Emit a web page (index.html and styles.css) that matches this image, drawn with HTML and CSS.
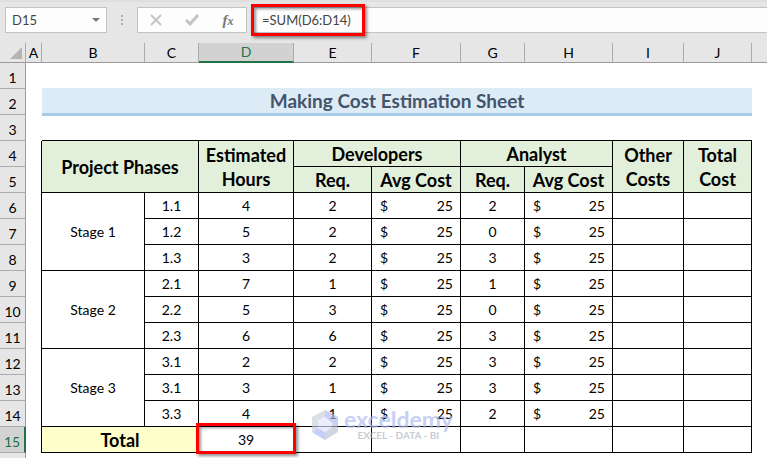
FILE: index.html
```
<!DOCTYPE html>
<html lang="en">
<head>
<meta charset="utf-8">
<title>Cost Estimation Sheet</title>
<link rel="stylesheet" href="styles.css">
</head>
<body>
<header class="formula-bar">
  <div class="name-box">
    <input class="name-input" type="text" aria-label="Name box" value="D15">
    <button class="tool drop" type="button" aria-label="Open name list"><svg width="8" height="4" viewBox="0 0 8 4"><path d="M0 0h8L4 4z" fill="#777"/></svg></button>
  </div>
  <div class="grip"><i></i><i></i><i></i></div>
  <div class="tools">
    <button class="tool" type="button" aria-label="Cancel"><svg width="12" height="12" viewBox="0 0 12 12"><path d="M1 1l10 10M11 1L1 11" stroke="#c4c4c4" stroke-width="2" fill="none"/></svg></button>
    <button class="tool" type="button" aria-label="Enter"><svg width="14" height="12" viewBox="0 0 14 12"><path d="M1 6l4 4L13 1" stroke="#c4c4c4" stroke-width="3" fill="none"/></svg></button>
    <button class="tool fx" type="button" aria-label="Insert function">f<span>x</span></button>
  </div>
  <div class="formula">
    <input class="formula-input" type="text" aria-label="Formula" value="=SUM(D6:D14)">
    <div class="mark mark-formula"></div>
  </div>
</header>
<main class="sheet">
<table class="grid">
  <colgroup><col class="w-n"><col class="w-a"><col class="w-b"><col class="w-c"><col class="w-d"><col class="w-e"><col class="w-f"><col class="w-g"><col class="w-h"><col class="w-i"><col class="w-j"><col></colgroup>
  <thead>
    <tr><th class="corner"><svg width="12" height="12" viewBox="0 0 12 12"><path d="M12 0v12H0z" fill="#b4b4b4"/></svg></th><th>A</th><th>B</th><th>C</th><th class="on">D</th><th>E</th><th>F</th><th>G</th><th>H</th><th>I</th><th>J</th><th></th></tr>
  </thead>
  <tbody>
    <tr><th>1</th><td colspan="11"></td></tr>
    <tr><th>2</th><td></td><td class="title" colspan="9">Making Cost Estimation Sheet</td><td></td></tr>
    <tr><th>3</th><td></td><td class="edge" colspan="9"></td><td></td></tr>
    <tr><th>4</th><td class="side"></td><td class="c h" colspan="2" rowspan="2">Project Phases</td><td class="c h" rowspan="2">Estimated Hours</td><td class="c h" colspan="2">Developers</td><td class="c h" colspan="2">Analyst</td><td class="c h" rowspan="2">Other Costs</td><td class="c h" rowspan="2">Total Cost</td><td></td></tr>
    <tr><th>5</th><td class="side"></td><td class="c h">Req.</td><td class="c h">Avg Cost</td><td class="c h">Req.</td><td class="c h">Avg Cost</td><td></td></tr>
    <tr><th>6</th><td class="side"></td><td class="c" rowspan="3">Stage 1</td><td class="c">1.1</td><td class="c">4</td><td class="c">2</td><td class="c"><div class="money"><span>$</span><span>25</span></div></td><td class="c">2</td><td class="c"><div class="money"><span>$</span><span>25</span></div></td><td class="c"></td><td class="c"></td><td></td></tr>
    <tr><th>7</th><td class="side"></td><td class="c">1.2</td><td class="c">5</td><td class="c">2</td><td class="c"><div class="money"><span>$</span><span>25</span></div></td><td class="c">0</td><td class="c"><div class="money"><span>$</span><span>25</span></div></td><td class="c"></td><td class="c"></td><td></td></tr>
    <tr><th>8</th><td class="side"></td><td class="c">1.3</td><td class="c">3</td><td class="c">2</td><td class="c"><div class="money"><span>$</span><span>25</span></div></td><td class="c">3</td><td class="c"><div class="money"><span>$</span><span>25</span></div></td><td class="c"></td><td class="c"></td><td></td></tr>
    <tr><th>9</th><td class="side"></td><td class="c" rowspan="3">Stage 2</td><td class="c">2.1</td><td class="c">7</td><td class="c">1</td><td class="c"><div class="money"><span>$</span><span>25</span></div></td><td class="c">1</td><td class="c"><div class="money"><span>$</span><span>25</span></div></td><td class="c"></td><td class="c"></td><td></td></tr>
    <tr><th>10</th><td class="side"></td><td class="c">2.2</td><td class="c">5</td><td class="c">3</td><td class="c"><div class="money"><span>$</span><span>25</span></div></td><td class="c">0</td><td class="c"><div class="money"><span>$</span><span>25</span></div></td><td class="c"></td><td class="c"></td><td></td></tr>
    <tr><th>11</th><td class="side"></td><td class="c">2.3</td><td class="c">6</td><td class="c">6</td><td class="c"><div class="money"><span>$</span><span>25</span></div></td><td class="c">3</td><td class="c"><div class="money"><span>$</span><span>25</span></div></td><td class="c"></td><td class="c"></td><td></td></tr>
    <tr><th>12</th><td class="side"></td><td class="c" rowspan="3">Stage 3</td><td class="c">3.1</td><td class="c">2</td><td class="c">2</td><td class="c"><div class="money"><span>$</span><span>25</span></div></td><td class="c">3</td><td class="c"><div class="money"><span>$</span><span>25</span></div></td><td class="c"></td><td class="c"></td><td></td></tr>
    <tr><th>13</th><td class="side"></td><td class="c">3.1</td><td class="c">3</td><td class="c">1</td><td class="c"><div class="money"><span>$</span><span>25</span></div></td><td class="c">3</td><td class="c"><div class="money"><span>$</span><span>25</span></div></td><td class="c"></td><td class="c"></td><td></td></tr>
    <tr><th>14</th><td class="side"></td><td class="c">3.3</td><td class="c">4</td><td class="c">1</td><td class="c"><div class="money"><span>$</span><span>25</span></div></td><td class="c">2</td><td class="c"><div class="money"><span>$</span><span>25</span></div></td><td class="c"></td><td class="c"></td><td></td></tr>
    <tr><th class="on">15</th><td class="side"></td><td class="c h total" colspan="2">Total</td><td class="c picked">39<div class="mark mark-cell"></div></td><td class="c anchor"><div class="brand"><svg width="28" height="32" viewBox="0 0 28 32"><path d="M14 1L1 8v15l6-4v-7l7-4z" fill="#c9cfdc"/><path d="M14 1l13 7v10l-6-4-7-6z" fill="#a9b8f2"/><path d="M7 12l7-4 7 6v4l-7 5-7-4z" fill="#dfe5fb"/><path d="M1 23l6-4 7 4v8z" fill="#a9b8f2"/><path d="M27 18v5l-13 8v-8l7-5v-4z" fill="#b9c1d4"/></svg><div class="brand-text"><div class="brand-name">exceldemy</div><div class="brand-tag">EXCEL - DATA - BI</div></div></div></td><td class="c"></td><td class="c"></td><td class="c"></td><td class="c"></td><td class="c"></td><td></td></tr>
    <tr class="rest"><th></th><td colspan="11"></td></tr>
  </tbody>
</table>
</main>
</body>
</html>
```
FILE: styles.css
```
* { box-sizing: border-box; }
body {
  margin: 0;
  height: 100vh;
  overflow: hidden;
  background: #fff;
  color: #000;
  font-family: Lato, "Open Sans", sans-serif;
  font-size: 14px;
}
.formula-bar {
  display: flex;
  height: 43px;
  padding: 5px 0 10px 5px;
  background: #e6e6e6;
  border-top: 2px solid #dfdfdf;
}
.name-box, .tools, .formula {
  display: flex;
  align-items: center;
  height: 26px;
  background: #fdfdfd;
  border: 1px solid #c3c3c3;
}
.name-box { width: 102px; }
.name-input, .formula-input {
  flex: 1;
  min-width: 0;
  height: 24px;
  padding: 0 6px;
  border: 0;
  outline: 0;
  background: none;
  color: #444;
  font: 13px/24px Lato, "Open Sans", sans-serif;
}
.formula-input { padding-left: 10px; }
.tool {
  display: flex;
  align-items: center;
  justify-content: center;
  flex: 1;
  height: 24px;
  padding: 0;
  border: 0;
  background: none;
}
.tool.drop { flex: 0 0 20px; }
.fx {
  color: #777;
  font: italic bold 15px "Liberation Serif", serif;
}
.fx span { font-size: 12px; padding-top: 3px; }
.grip {
  display: flex;
  flex-direction: column;
  align-items: center;
  justify-content: center;
  gap: 2px;
  width: 30px;
  height: 26px;
}
.grip i { width: 2px; height: 2px; background: #b0b0b0; }
.tools { width: 110px; margin-right: 4px; }
.formula { position: relative; flex: 1; border-right: 0; }
.mark {
  position: absolute;
  border: 3px solid #f00;
  box-shadow: 2px 2px 3px rgba(0, 0, 0, .45), inset 2px 2px 3px rgba(0, 0, 0, .4);
  pointer-events: none;
}
.mark-formula { left: -1px; top: -4px; width: 114px; height: 32px; }
.mark-cell { left: -3px; top: -4px; width: 100px; height: 31px; z-index: 1; }

.grid {
  width: 100%;
  table-layout: fixed;
  border-collapse: separate;
  border-spacing: 0;
}
.w-n { width: 26px; }
.w-a { width: 16px; }
.w-b { width: 103px; }
.w-c { width: 54px; }
.w-d { width: 95px; }
.w-e { width: 78px; }
.w-f { width: 89px; }
.w-g { width: 64px; }
.w-h { width: 88px; }
.w-i { width: 71px; }
.w-j { width: 68px; }
td, th { height: 26px; padding: 0; text-align: center; line-height: 24px; }
th {
  background: #e6e6e6;
  border-right: 1px solid #9b9b9b;
  border-bottom: 1px solid #ababab;
  font-weight: 400;
}
thead th { height: 20px; line-height: 18px; border-bottom-color: #9b9b9b; border-right-color: #ababab; }
thead th:last-child { border-right: 0; }
tbody th { padding-top: 4px; line-height: 20px; }
.corner { padding: 0 3px 0 0; line-height: 0; text-align: right; vertical-align: middle; }
.on { background: #d2d2d2; color: #217346; }
thead .on { border-bottom: 2px solid #217346; }
tbody .on { border-right: 2px solid #217346; }
.title {
  background: #ddebf7;
  border-bottom: 2px solid #a9c9e8;
  box-shadow: 0 -1px 0 #ddebf7, 0 1px 0 #a9c9e8;
  color: #44546a;
  font-size: 19px;
  font-weight: 700;
}
.edge { border-bottom: 1px solid #000; }
.side { border-right: 1px solid #000; }
.c { border-right: 1px solid #000; border-bottom: 1px solid #000; }
.h { background: #e2efda; font-size: 18px; font-weight: 700; }
.total { background: #ffc; }
.money { display: flex; justify-content: space-between; padding: 0 7px 0 8px; }
.picked, .anchor { position: relative; }
.rest th, .rest td { height: 5px; line-height: 0; padding: 0; border-bottom: 0; }
.brand {
  position: absolute;
  left: 17px;
  top: -18px;
  display: flex;
  gap: 5px;
  opacity: .65;
  white-space: nowrap;
}
.brand-text { text-align: center; }
.brand-name { color: #a9b9f0; font-size: 23px; line-height: 20px; font-weight: 700; }
.brand-tag { color: #aab0bc; font-size: 10px; line-height: 13px; font-weight: 700; }
```
